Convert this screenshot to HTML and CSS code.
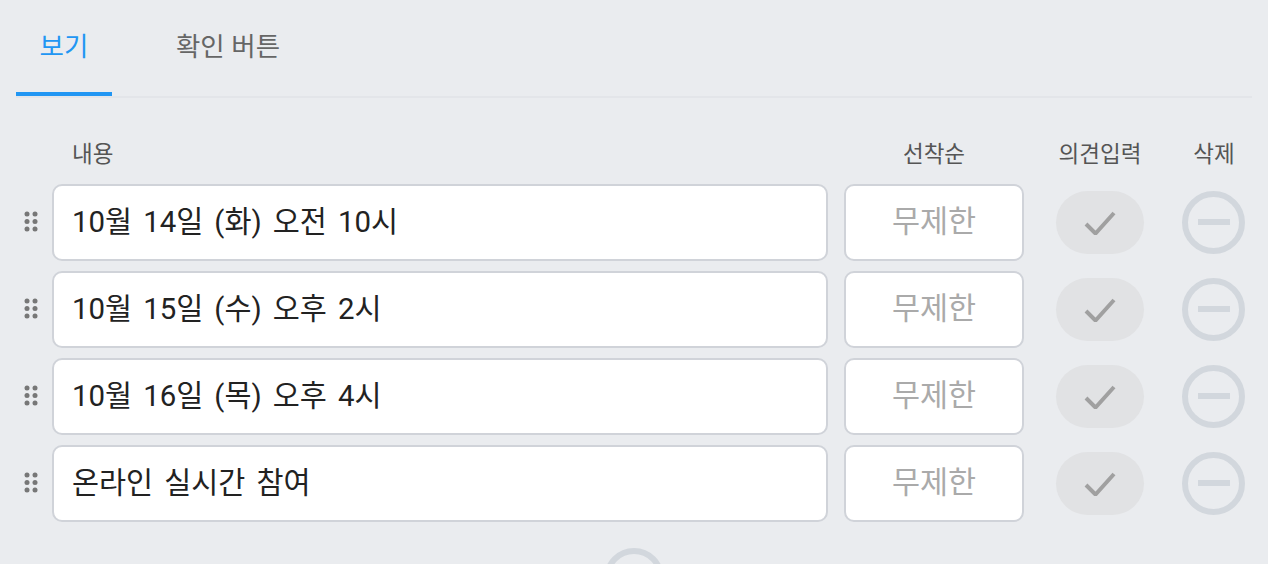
FILE: index.html
```html
<!DOCTYPE html>
<html lang="ko">
<head>
  <meta charset="UTF-8">
  <title>보기</title>
  <link rel="stylesheet" href="styles.css">
</head>
<body>
  <div class="tabs">
    <div class="tab active">보기</div>
    <div class="tab">확인 버튼</div>
  </div>

  <div class="head-row">
    <div class="col-main">내용</div>
    <div class="col-limit">선착순</div>
    <div class="col-check">의견입력</div>
    <div class="col-del">삭제</div>
  </div>

  <div class="rows">
    <div class="row">
      <svg class="drag" viewBox="0 0 14 21"><circle cx="3" cy="3" r="2.5"/><circle cx="11" cy="3" r="2.5"/><circle cx="3" cy="10.500" r="2.500"/><circle cx="11" cy="10.500" r="2.500"/><circle cx="3" cy="18" r="2.500"/><circle cx="11" cy="18" r="2.500"/></svg>
      <div class="box main-box">10월 14일 (화) 오전 10시</div>
      <div class="box limit-box">무제한</div>
      <div class="pill"><svg viewBox="0 0 32 24"><path d="M2 13l9.500 9.500L30 2"/></svg></div>
      <div class="minus"></div>
    </div>
    <div class="row">
      <svg class="drag" viewBox="0 0 14 21"><circle cx="3" cy="3" r="2.5"/><circle cx="11" cy="3" r="2.5"/><circle cx="3" cy="10.500" r="2.500"/><circle cx="11" cy="10.500" r="2.500"/><circle cx="3" cy="18" r="2.500"/><circle cx="11" cy="18" r="2.500"/></svg>
      <div class="box main-box">10월 15일 (수) 오후 2시</div>
      <div class="box limit-box">무제한</div>
      <div class="pill"><svg viewBox="0 0 32 24"><path d="M2 13l9.500 9.500L30 2"/></svg></div>
      <div class="minus"></div>
    </div>
    <div class="row">
      <svg class="drag" viewBox="0 0 14 21"><circle cx="3" cy="3" r="2.5"/><circle cx="11" cy="3" r="2.5"/><circle cx="3" cy="10.500" r="2.500"/><circle cx="11" cy="10.500" r="2.500"/><circle cx="3" cy="18" r="2.500"/><circle cx="11" cy="18" r="2.500"/></svg>
      <div class="box main-box">10월 16일 (목) 오후 4시</div>
      <div class="box limit-box">무제한</div>
      <div class="pill"><svg viewBox="0 0 32 24"><path d="M2 13l9.500 9.500L30 2"/></svg></div>
      <div class="minus"></div>
    </div>
    <div class="row">
      <svg class="drag" viewBox="0 0 14 21"><circle cx="3" cy="3" r="2.5"/><circle cx="11" cy="3" r="2.5"/><circle cx="3" cy="10.500" r="2.500"/><circle cx="11" cy="10.500" r="2.500"/><circle cx="3" cy="18" r="2.500"/><circle cx="11" cy="18" r="2.500"/></svg>
      <div class="box main-box">온라인 실시간 참여</div>
      <div class="box limit-box">무제한</div>
      <div class="pill"><svg viewBox="0 0 32 24"><path d="M2 13l9.500 9.500L30 2"/></svg></div>
      <div class="minus"></div>
    </div>
  </div>

  <!-- add button, cut off by the window -->
  <div class="add-wrap"><div class="add"></div></div>
</body>
</html>
```

FILE: styles.css
```css
* {
  box-sizing: border-box;
}

html,
body {
  height: 564px;
  overflow: hidden;
}

body {
  margin: 0;
  padding: 0 16px;
  background-color: #eaecef;
  font-family: Roboto, "Noto Sans CJK KR", sans-serif;
  color: #222;
}

/* Tabs */
.tabs {
  display: flex;
  height: 98px;
  border-bottom: 2px solid #e3e5e9;
}

.tab {
  width: 96px;
  height: 96px;
  padding-top: 29px;
  font-size: 26.5px;
  line-height: 36px;
  text-align: center;
  color: #666;
  white-space: nowrap;
}

.tab + .tab {
  width: 168px;
  margin-left: 32px;
}

.tab.active {
  color: #2196f3;
  border-bottom: 4px solid #2196f3;
}

/* Column labels */
.head-row {
  display: flex;
  height: 86px;
  padding: 41px 0 0 36px;
  font-size: 22.5px;
  line-height: 30px;
  color: #555;
}

.col-main {
  width: 792px;
  padding-left: 20px;
}

.col-limit {
  width: 180px;
  text-align: center;
}

.col-check {
  width: 88px;
  margin-left: 32px;
  text-align: center;
  white-space: nowrap;
}

.col-del {
  width: 64px;
  margin-left: 38px;
  text-align: center;
}

/* Rows */
.rows {
  display: flex;
  flex-direction: column;
  gap: 10px;
}

.row {
  display: flex;
  align-items: center;
  height: 77px;
}

.drag {
  width: 14px;
  height: 21px;
  margin: 0 14px 2px 8px;
  fill: #777;
}

.box {
  height: 77px;
  background-color: #fff;
  border: 2px solid #d0d3d9;
  border-radius: 10px;
  display: flex;
  align-items: center;
  padding-bottom: 8px;
  white-space: nowrap;
}

.main-box {
  width: 776px;
  padding-left: 18px;
  font-size: 29.4px;
  word-spacing: 3.8px;
  color: #222;
}

.limit-box {
  width: 180px;
  margin-left: 16px;
  justify-content: center;
  font-size: 30.5px;
  color: #aaa;
}

.pill {
  width: 88px;
  height: 63px;
  margin-left: 32px;
  border-radius: 32px;
  background-color: #e1e2e4;
  display: flex;
  align-items: center;
  justify-content: center;
}

.pill svg {
  width: 32px;
  height: 24px;
  fill: none;
  stroke: #a0a0a0;
  stroke-width: 4;
}

.minus {
  width: 63px;
  height: 63px;
  margin-left: 38px;
  margin-bottom: 1px;
  border: 6px solid #d2d7dd;
  border-radius: 50%;
  display: flex;
  align-items: center;
  justify-content: center;
}

.minus::before {
  content: "";
  width: 32px;
  height: 6px;
  background-color: #d2d7dd;
}

.add-wrap {
  display: flex;
  justify-content: center;
  height: 16px;
  margin-top: 26px;
  overflow: hidden;
}

.add {
  flex: none;
  width: 60px;
  height: 60px;
  border: 6px solid #d2d7dd;
  border-radius: 50%;
}
```
